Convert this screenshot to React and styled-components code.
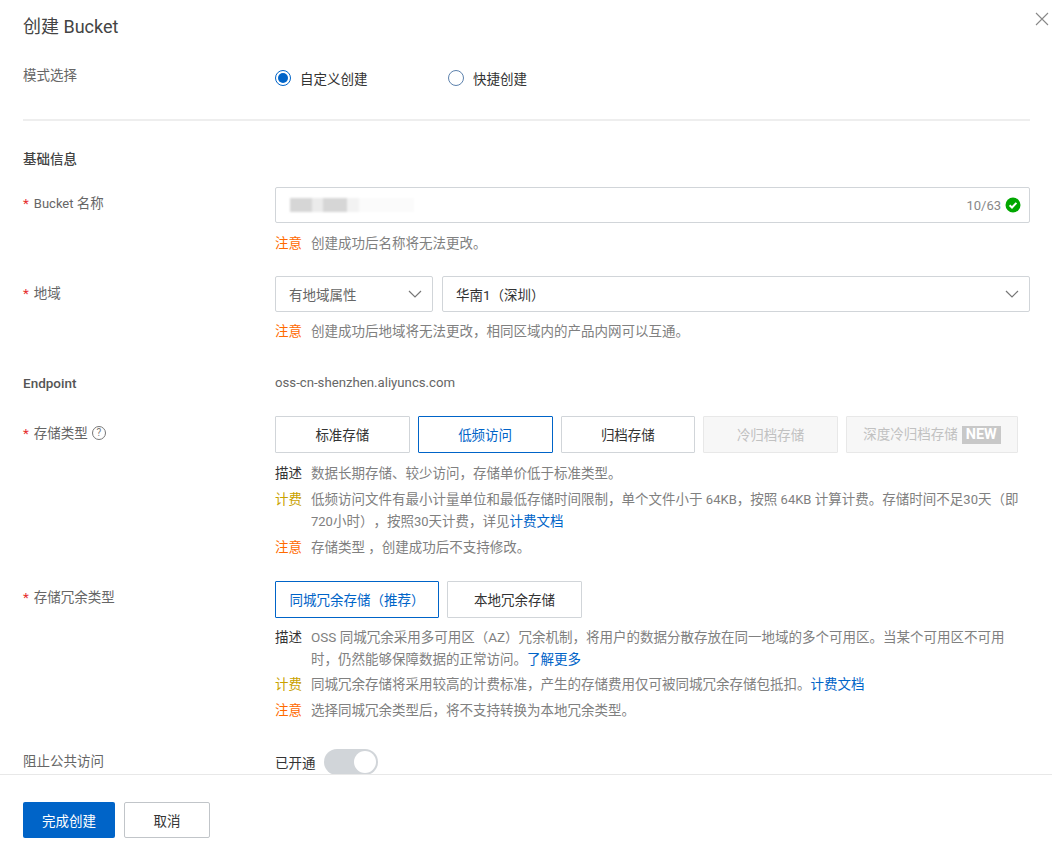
import React from 'react'
import styled, { createGlobalStyle } from 'styled-components';

const GlobalStyle = createGlobalStyle`
    html, body {
        margin: 0;
        padding: 0;
        background: #fff;
    }
    body {
        font-family: Roboto, "Noto Sans CJK SC", sans-serif;
        font-size: 13.5px;
        color: #333;
        text-spacing-trim: space-all;
    }
    * {
        box-sizing: border-box;
    }
`;

const Page = styled.div`
    position: relative;
    width: 1052px;
    height: 849px;
    display: flex;
    flex-direction: column;
    overflow: hidden;
    background: #fff;
`;
const Body = styled.div`
    height: 774px;
    padding: 0 22px 0 23px;
    overflow: hidden;
`;
const Title = styled.h1`
    margin: 0;
    height: 54px;
    line-height: 54px;
    font-size: 18px;
    font-weight: 400;
    color: #444;
`;
const Close = styled.button`
    position: absolute;
    top: 12px;
    right: 3px;
    width: 14px;
    height: 14px;
    padding: 0;
    border: none;
    background: none;
    color: #888;
    line-height: 0;
`;
const Row = styled.div`
    display: grid;
    grid-template-columns: 252px 755px;
    margin-top: ${(p) => p.$top || 0}px;
`;
const Label = styled.div`
    display: flex;
    align-items: center;
    height: 24px;
    line-height: 24px;
    margin-top: ${(p) => p.$offset || 0}px;
    color: ${(p) => (p.$strong ? '#555' : '#666')};
    font-weight: ${(p) => (p.$strong ? 500 : 400)};
`;
const Star = styled.span`
    color: #e62e2e;
    margin-right: 5px;
`;
const Latin = styled.span`
    font-size: 13px;
    line-height: 1;
`;
const HelpIcon = styled.span`
    display: inline-flex;
    align-items: center;
    justify-content: center;
    width: 14px;
    height: 14px;
    margin-left: 4px;
    border: 1px solid #777;
    border-radius: 50%;
    font-size: 10px;
    line-height: 1;
    color: #777;
`;
const Radios = styled.div`
    display: flex;
    align-items: center;
    height: 24px;
    margin-top: 3px;
`;
const RadioItem = styled.label`
    display: flex;
    align-items: center;
    width: 173px;
    color: #333;
`;
const RadioDot = styled.span`
    width: 16px;
    height: 16px;
    margin-right: 9px;
    border-radius: 50%;
    border: 1px solid ${(p) => (p.$on ? '#0064c8' : '#5d82ad')};
    display: flex;
    align-items: center;
    justify-content: center;
    &::after {
        content: '';
        display: ${(p) => (p.$on ? 'block' : 'none')};
        width: 10px;
        height: 10px;
        border-radius: 50%;
        background: #0064c8;
    }
`;
const Divider = styled.hr`
    margin: 29px 0 0;
    border: none;
    height: 2px;
    background: #eee;
`;
const SectionTitle = styled.div`
    margin-top: 26px;
    height: 24px;
    line-height: 24px;
    font-weight: 500;
    color: #444;
`;
const InputBox = styled.div`
    display: flex;
    align-items: center;
    justify-content: space-between;
    height: 36px;
    padding: 0 8px 0 14px;
    border: 1px solid #d1d5d9;
    border-radius: 2px;
`;
const BlurredName = styled.div`
    width: 124px;
    height: 14px;
    filter: blur(1px);
    background: linear-gradient(
        90deg,
        #d6d6d6 0 18%,
        #ebebeb 18% 27%,
        #d6d6d6 27% 46%,
        #f2f2f2 46% 56%,
        #fbfbfb 56% 100%
    );
`;
const Counter = styled.div`
    display: flex;
    align-items: center;
    gap: 4px;
    font-size: 13px;
    color: #888;
`;
const SelectRow = styled.div`
    display: flex;
    gap: 9px;
`;
const Select = styled.div`
    display: flex;
    align-items: center;
    justify-content: space-between;
    flex: ${(p) => (p.$grow ? 1 : '0 0 158px')};
    height: 36px;
    padding: 0 9px 1px 13px;
    border: 1px solid #d1d5d9;
    border-radius: 2px;
    color: ${(p) => (p.$muted ? '#666' : '#333')};
`;
const Hint = styled.div`
    display: grid;
    grid-template-columns: 36px 719px;
    margin-top: ${(p) => p.$top ?? 4}px;
    line-height: 22px;
    color: #808080;
`;
const HintTag = styled.span`
    color: ${(p) => p.$color};
`;
const HintLine = styled.div`
    white-space: nowrap;
`;
const Link = styled.a`
    color: #0064c8;
    text-decoration: none;
`;
const Plain = styled.div`
    height: 24px;
    line-height: 24px;
    font-size: 13.2px;
    color: #666;
`;
const Options = styled.div`
    display: flex;
    gap: ${(p) => p.$gap}px;
`;
const Option = styled.button`
    width: ${(p) => p.$width}px;
    height: 37px;
    padding: 0 0 2px;
    border: 1px solid ${(p) => (p.$active ? '#0064c8' : p.$disabled ? '#e8e8e8' : '#d1d5d9')};
    border-radius: 1px;
    background: ${(p) => (p.$disabled ? '#f7f7f7' : '#fff')};
    color: ${(p) => (p.$active ? '#0064c8' : p.$disabled ? '#c1c1c1' : '#333')};
    font: inherit;
    white-space: nowrap;
`;
const NewTag = styled.span`
    display: inline-block;
    margin-left: 4px;
    padding: 0 4px;
    height: 18px;
    line-height: 18px;
    font-size: 14.5px;
    background: #c8c8c8;
    color: #fff;
    font-weight: 700;
    vertical-align: middle;
`;
const SwitchRow = styled.div`
    display: flex;
    align-items: center;
    gap: 8px;
    height: 26px;
`;
const Switch = styled.span`
    display: flex;
    justify-content: flex-end;
    align-items: center;
    width: 54px;
    height: 26px;
    padding: 2px;
    border-radius: 13px;
    background: #d1d5d9;
    &::after {
        content: '';
        width: 22px;
        height: 22px;
        border-radius: 50%;
        background: #fff;
    }
`;
const Footer = styled.div`
    display: flex;
    gap: 9px;
    height: 75px;
    padding: 27px 23px 0;
    border-top: 1px solid #e8e8e8;
`;
const PrimaryButton = styled.button`
    width: 92px;
    height: 36px;
    border: none;
    border-radius: 2px;
    background: #0064c8;
    color: #fff;
    font: inherit;
`;
const CancelButton = styled.button`
    width: 86px;
    height: 36px;
    border: 1px solid #c1c5c9;
    border-radius: 2px;
    background: #fff;
    color: #333;
    font: inherit;
`;

const Chevron = () => (
  <svg width="16" height="16" viewBox="0 0 16 16" fill="none" stroke="#777" strokeWidth="1.2">
    <path d="M2 5l6 6 6-6" />
  </svg>
);

const App = () => {
  return (
    <Page>
      <GlobalStyle />
      <Close aria-label="关闭">
        <svg width="14" height="14" viewBox="0 0 14 14" fill="none" stroke="currentColor" strokeWidth="1.1">
          <path d="M1 1l12 12M13 1L1 13" />
        </svg>
      </Close>
      <Body>
        <Title>创建 Bucket</Title>
        <Row $top={9}>
          <Label>模式选择</Label>
          <Radios>
            <RadioItem><RadioDot $on />自定义创建</RadioItem>
            <RadioItem><RadioDot />快捷创建</RadioItem>
          </Radios>
        </Row>
        <Divider />
        <SectionTitle>基础信息</SectionTitle>
        <Row $top={16}>
          <Label $offset={4}><Star>*</Star><Latin>Bucket</Latin>&nbsp;名称</Label>
          <div>
            <InputBox>
              <BlurredName />
              <Counter>
                10/63
                <svg width="16" height="16" viewBox="0 0 16 16">
                  <circle cx="8" cy="8" r="7.5" fill="#00a700" />
                  <path d="M4.6 8.2l2.4 2.3 4.4-4.6" fill="none" stroke="#fff" strokeWidth="2" />
                </svg>
              </Counter>
            </InputBox>
            <Hint $top={9}><HintTag $color="#ff6a00">注意</HintTag><span>创建成功后名称将无法更改。</span></Hint>
          </div>
        </Row>
        <Row $top={22}>
          <Label $offset={5}><Star>*</Star>地域</Label>
          <div>
            <SelectRow>
              <Select $muted>有地域属性<Chevron /></Select>
              <Select $grow>华南1（深圳）<Chevron /></Select>
            </SelectRow>
            <Hint $top={8}><HintTag $color="#ff6a00">注意</HintTag><span>创建成功后地域将无法更改，相同区域内的产品内网可以互通。</span></Hint>
          </div>
        </Row>
        <Row $top={29}>
          <Label $strong>Endpoint</Label>
          <Plain>oss-cn-shenzhen.aliyuncs.com</Plain>
        </Row>
        <Row $top={21}>
          <Label $offset={5}><Star>*</Star>存储类型<HelpIcon>?</HelpIcon></Label>
          <div>
            <Options $gap={8}>
              <Option $width={134.75}>标准存储</Option>
              <Option $width={134.75} $active>低频访问</Option>
              <Option $width={134.75}>归档存储</Option>
              <Option $width={134.75} $disabled>冷归档存储</Option>
              <Option $width={172} $disabled>深度冷归档存储<NewTag>NEW</NewTag></Option>
            </Options>
            <Hint $top={9}><HintTag $color="#333">描述</HintTag><span>数据长期存储、较少访问，存储单价低于标准类型。</span></Hint>
            <Hint>
              <HintTag $color="#c9a200">计费</HintTag>
              <div>
                <HintLine>低频访问文件有最小计量单位和最低存储时间限制，单个文件小于 <Latin>64KB</Latin>，按照 <Latin>64KB</Latin> 计算计费。存储时间不足<Latin>30</Latin>天（即</HintLine>
                <HintLine><Latin>720</Latin>小时），按照<Latin>30</Latin>天计费，详见<Link>计费文档</Link></HintLine>
              </div>
            </Hint>
            <Hint><HintTag $color="#ff6a00">注意</HintTag><span>存储类型 ，创建成功后不支持修改。</span></Hint>
          </div>
        </Row>
        <Row $top={23}>
          <Label $offset={4}><Star>*</Star>存储冗余类型</Label>
          <div>
            <Options $gap={8}>
              <Option $width={164} $active>同城冗余存储（推荐）</Option>
              <Option $width={135}>本地冗余存储</Option>
            </Options>
            <Hint $top={8}>
              <HintTag $color="#333">描述</HintTag>
              <div>
                <HintLine>OSS 同城冗余采用多可用区（AZ）冗余机制，将用户的数据分散存放在同一地域的多个可用区。当某个可用区不可用</HintLine>
                <HintLine>时，仍然能够保障数据的正常访问。<Link>了解更多</Link></HintLine>
              </div>
            </Hint>
            <Hint $top={3}><HintTag $color="#c9a200">计费</HintTag><span>同城冗余存储将采用较高的计费标准，产生的存储费用仅可被同城冗余存储包抵扣。<Link>计费文档</Link></span></Hint>
            <Hint><HintTag $color="#ff6a00">注意</HintTag><span>选择同城冗余类型后，将不支持转换为本地冗余类型。</span></Hint>
          </div>
        </Row>
        <Row $top={28}>
          <Label>阻止公共访问</Label>
          <SwitchRow>已开通<Switch /></SwitchRow>
        </Row>
      </Body>
      <Footer>
        <PrimaryButton>完成创建</PrimaryButton>
        <CancelButton>取消</CancelButton>
      </Footer>
    </Page>
  )
}

export default App
